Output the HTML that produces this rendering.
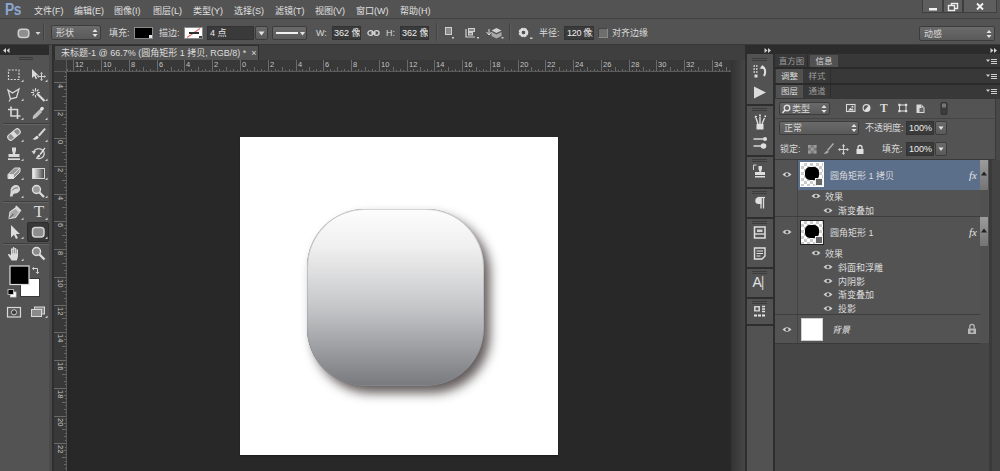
<!DOCTYPE html>
<html lang="zh-CN">
<head>
<meta charset="utf-8">
<title>Photoshop</title>
<style>
*{box-sizing:border-box;margin:0;padding:0}
html,body{width:1000px;height:471px;overflow:hidden;background:#535353}
body{position:relative;font-family:"Liberation Sans","Noto Sans CJK SC",sans-serif;font-size:11px;color:#dcdcdc;line-height:1}
.abs{position:absolute}
.t{position:absolute;white-space:nowrap;line-height:12px;height:12px;font-size:9px;color:#dadada}
/* menubar */
#menubar{left:0;top:0;width:1000px;height:18px;background:#535353}
#menubar .t{top:5px;font-size:9px;color:#e0e0e0}
#ps{left:5px;top:2px;font-size:16px;font-weight:bold;color:#8ca7d2;line-height:16px;height:16px;letter-spacing:-0.5px;transform:scaleX(.86);transform-origin:0 0}
.wbtn{position:absolute;top:0;height:13px;background:#5e5e5e;border:1px solid #3e3e3e;border-top:none}
/* options bar */
#optbar{left:0;top:18px;width:1000px;height:27px;background:#535353;border-top:1px solid #424242;border-bottom:1px solid #383838}
.dd{position:absolute;background:linear-gradient(#6a6a6a,#5a5a5a);border:1px solid #3c3c3c;border-radius:2px}
.field{position:absolute;background:#3a3a3a;border:1px solid #333}
.vsep{position:absolute;width:1px;background:#424242;border-right:1px solid #5c5c5c;box-sizing:content-box}
/* doc */
#tabbar{left:54px;top:45px;width:692px;height:15px;background:#3f3f3f}
#doctab{left:54px;top:45px;width:205px;height:15px;background:#535353;border:1px solid #2e2e2e;border-bottom:none}
#hruler{left:55px;top:60px;width:676px;height:12px;background:#383838;border-bottom:1px solid #5a5a5a;overflow:hidden}
#vruler{left:54px;top:72px;width:13px;height:399px;background:#383838;border-right:1px solid #5a5a5a;overflow:hidden}
#canvas{left:67px;top:72px;width:664px;height:399px;background:#282828;overflow:hidden}
#doc{left:173px;top:65px;width:318px;height:318px;background:#fff;box-shadow:0 1px 1px #1c1c1c}
.rl{position:absolute;font-size:7.5px;color:#c4c4c4;line-height:8px}
.tk{position:absolute;width:1px;background:#6a6a6a;display:block}
.tk.h{height:1px;width:auto}
.rv{writing-mode:vertical-rl;line-height:8px;width:8px}
/* tools */
#tools{left:0;top:45px;width:49px;height:426px;background:#535353}
/* right */
#rightbg{left:745px;top:45px;width:255px;height:426px;background:#3a3a3a}
.ptab{position:absolute;height:13px;font-size:8.5px;line-height:12px;text-align:center;color:#9c9c9c;white-space:nowrap}
.ptab.on{background:#515151;color:#d8d8d8}
.igrip{position:absolute;left:752px;width:15px;height:3px;border-top:1px solid #3c3c3c;border-bottom:1px solid #3c3c3c}
.isep{position:absolute;left:747px;width:26px;height:2px;background:#2e2e2e}
.ln{font-size:9px;color:#dcdcdc}
.fx{position:absolute;left:969px;width:10px;height:12px;font-family:"Liberation Serif",serif;font-style:italic;font-size:11px;line-height:12px;color:#e6e6e6}
.thumb{position:absolute;left:800px;width:24px;height:25px;border:1px solid #222;background-color:#fff;background-image:linear-gradient(45deg,#ccc 25%,transparent 25%,transparent 75%,#ccc 75%),linear-gradient(45deg,#ccc 25%,transparent 25%,transparent 75%,#ccc 75%);background-size:6px 6px;background-position:0 0,3px 3px}
.thumb i{position:absolute;left:4px;top:4px;width:14px;height:13px;border-radius:5px;background:#000}
.thumb b{position:absolute;left:14px;top:15px;width:8px;height:8px;border:1px solid #f0f0f0;background:#666}
</style>
</head>
<body>
<!-- MENUBAR -->
<div id="menubar" class="abs">
  <div id="ps" class="abs">Ps</div>
  <div class="t" style="left:34px">文件(F)</div>
  <div class="t" style="left:74px">编辑(E)</div>
  <div class="t" style="left:114px">图像(I)</div>
  <div class="t" style="left:153px">图层(L)</div>
  <div class="t" style="left:193px">类型(Y)</div>
  <div class="t" style="left:234px">选择(S)</div>
  <div class="t" style="left:275px">滤镜(T)</div>
  <div class="t" style="left:315px">视图(V)</div>
  <div class="t" style="left:356px">窗口(W)</div>
  <div class="t" style="left:400px">帮助(H)</div>
  <div class="wbtn" style="left:922px;width:21px"><svg width="19" height="12" viewBox="0 0 19 12"><rect x="6" y="8" width="8" height="2.5" fill="#f0f0f0"/></svg></div>
  <div class="wbtn" style="left:943px;width:20px"><svg width="18" height="12" viewBox="0 0 18 12"><rect x="7.5" y="3.5" width="6" height="5" fill="none" stroke="#f0f0f0" stroke-width="1.4"/><rect x="4.500" y="5.500" width="6" height="5" fill="#5e5e5e" stroke="#f0f0f0" stroke-width="1.4"/></svg></div>
  <div class="wbtn" style="left:963px;width:34px"><svg width="32" height="12" viewBox="0 0 32 12"><path d="M13 3.500l6 6M19 3.500l-6 6" stroke="#f4f4f4" stroke-width="1.8"/></svg></div>
</div>

<!-- OPTIONS BAR -->
<div id="optbar" class="abs"></div>
<div id="optitems">
  <svg class="abs" style="left:16px;top:26px" width="26" height="14" viewBox="0 0 26 14"><rect x="2.300" y="3.300" width="10.500" height="8.200" rx="3" fill="#8e8e8e" stroke="#cfcfcf" stroke-width="1.500"/><path d="M19.500 6h5l-2.500 3z" fill="#d8d8d8"/></svg>
  <div class="vsep" style="left:43px;top:23px;height:18px"></div>
  <div class="dd" style="left:51px;top:25px;width:50px;height:15px"></div>
  <div class="t" style="left:56px;top:27px">形状</div>
  <svg class="abs" style="left:92px;top:28px" width="6" height="10" viewBox="0 0 6 10"><path d="M0.500 4l2.500-3 2.500 3zM0.500 6l2.500 3 2.500-3z" fill="#e4e4e4"/></svg>
  <div class="t" style="left:109px;top:27px">填充:</div>
  <div class="abs" style="left:134px;top:27px;width:19px;height:12px;background:#000;border:1px solid #8a8a8a"><i style="position:absolute;right:0;bottom:0;width:3px;height:3px;background:#e8e8e8"></i></div>
  <div class="t" style="left:159px;top:27px">描边:</div>
  <div class="abs" style="left:184px;top:27px;width:19px;height:12px;background:#fff;border:1px solid #8a8a8a;overflow:hidden"><svg width="17" height="10" viewBox="0 0 17 10" style="display:block"><path d="M2 9.500L15 0.500" stroke="#e07070" stroke-width="1.200"/><path d="M4 5h10" stroke="#2e2e2e" stroke-width="2"/><rect x="14" y="8" width="3" height="2" fill="#444"/></svg></div>
  <div class="field" style="left:207px;top:26px;width:47px;height:14px"></div>
  <div class="t" style="left:210px;top:27px;color:#e8e8e8">4 点</div>
  <div class="dd" style="left:255px;top:26px;width:13px;height:14px"></div>
  <svg class="abs" style="left:258px;top:31px" width="7" height="5" viewBox="0 0 7 5"><path d="M0.500 0.500h6l-3 4z" fill="#e4e4e4"/></svg>
  <div class="dd" style="left:272px;top:26px;width:35px;height:14px"></div>
  <div class="abs" style="left:276px;top:32px;width:22px;height:2px;background:#f0f0f0"></div>
  <svg class="abs" style="left:300px;top:32px" width="5" height="4" viewBox="0 0 5 4"><path d="M0 0h5l-2.500 3.500z" fill="#e4e4e4"/></svg>
  <div class="t" style="left:316px;top:27px">W:</div>
  <div class="field" style="left:332px;top:26px;width:29px;height:14px;overflow:hidden"><div class="t" style="left:1px;top:0px;color:#efefef">362 像素</div></div>
  <svg class="abs" style="left:367px;top:29px" width="13" height="8" viewBox="0 0 13 8"><ellipse cx="3.500" cy="4" rx="2.600" ry="2.300" fill="none" stroke="#d8d8d8" stroke-width="1.300"/><ellipse cx="9.500" cy="4" rx="2.600" ry="2.300" fill="none" stroke="#d8d8d8" stroke-width="1.300"/><path d="M4 4h5" stroke="#d8d8d8" stroke-width="1.200"/></svg>
  <div class="t" style="left:386px;top:27px">H:</div>
  <div class="field" style="left:400px;top:26px;width:29px;height:14px;overflow:hidden"><div class="t" style="left:1px;top:0px;color:#efefef">362 像素</div></div>
  <div class="vsep" style="left:436px;top:23px;height:18px"></div>
  <svg class="abs" style="left:444px;top:26px" width="60" height="14" viewBox="0 0 60 14"><rect x="1.500" y="1.500" width="6" height="7" fill="#8a8a8a" stroke="#d0d0d0"/><rect x="8" y="11" width="2" height="1.500" fill="#ccc"/><path d="M22 3v8h9" fill="none" stroke="#d0d0d0" stroke-width="1.200"/><rect x="24.500" y="2.500" width="6" height="3" fill="#8a8a8a" stroke="#d0d0d0"/><rect x="24.500" y="6.500" width="4" height="2.500" fill="#8a8a8a" stroke="#d0d0d0"/><rect x="33" y="11" width="2" height="1.500" fill="#ccc"/><g transform="translate(2.500 0)"><path d="M50 2l5 2.500-5 2.500-5-2.500z" fill="#cfcfcf"/><path d="M45 6l5 2.500 5-2.500v4l-5 2.500-5-2.500z" fill="#a8a8a8"/><path d="M42.500 3v6M40 6l2.500 3 2.500-3" stroke="#ddd" fill="none"/><rect x="55" y="11" width="2" height="1.500" fill="#ccc"/></g></svg>
  <div class="vsep" style="left:509px;top:23px;height:18px"></div>
  <svg class="abs" style="left:518px;top:27px" width="16" height="13" viewBox="0 0 16 13"><circle cx="5.500" cy="5.500" r="3.400" fill="none" stroke="#dedede" stroke-width="2.800" stroke-dasharray="2.200 0.500"/><circle cx="5.500" cy="5.500" r="3" fill="none" stroke="#dedede" stroke-width="2"/><rect x="12" y="10.500" width="2.500" height="1.500" fill="#ccc"/></svg>
  <div class="t" style="left:539px;top:27px">半径:</div>
  <div class="field" style="left:564px;top:26px;width:30px;height:14px;overflow:hidden"><div class="t" style="left:2px;top:0px;color:#efefef;letter-spacing:-0.3px">120 像素</div></div>
  <div class="abs" style="left:598px;top:28px;width:10px;height:10px;background:#6e6e6e;border:1px solid #8a8a8a;border-top-color:#444;border-left-color:#444"></div>
  <div class="t" style="left:612px;top:27px">对齐边缘</div>
  <div class="dd" style="left:919px;top:26px;width:76px;height:15px"></div>
  <div class="t" style="left:924px;top:28px">动感</div>
  <svg class="abs" style="left:986px;top:29px" width="6" height="10" viewBox="0 0 6 10"><path d="M0.500 4l2.500-3 2.500 3zM0.500 6l2.500 3 2.500-3z" fill="#e4e4e4"/></svg>
</div>

<!-- DOCUMENT WINDOW -->
<div id="tabbar" class="abs"></div>
<div id="doctab" class="abs"><div class="t" id="tabtxt" style="left:6px;top:1px;font-size:9px;color:#dedede">未标题-1 @ 66.7% (圆角矩形 1 拷贝, RGB/8) * &nbsp;×</div></div>
<div id="hruler" class="abs"><i class="tk" style="left:1px;top:10px;height:2px"></i><i class="tk" style="left:5px;top:7px;height:5px"></i><i class="tk" style="left:8px;top:10px;height:2px"></i><i class="tk" style="left:12px;top:9px;height:3px"></i><i class="tk" style="left:15px;top:10px;height:2px"></i><i class="tk" style="left:18px;top:0;height:12px"></i><span class="rl" style="left:20px;top:1px">12</span><i class="tk" style="left:22px;top:10px;height:2px"></i><i class="tk" style="left:25px;top:9px;height:3px"></i><i class="tk" style="left:29px;top:10px;height:2px"></i><i class="tk" style="left:32px;top:7px;height:5px"></i><i class="tk" style="left:36px;top:10px;height:2px"></i><i class="tk" style="left:39px;top:9px;height:3px"></i><i class="tk" style="left:43px;top:10px;height:2px"></i><i class="tk" style="left:46px;top:0;height:12px"></i><span class="rl" style="left:48px;top:1px">10</span><i class="tk" style="left:50px;top:10px;height:2px"></i><i class="tk" style="left:53px;top:9px;height:3px"></i><i class="tk" style="left:57px;top:10px;height:2px"></i><i class="tk" style="left:60px;top:7px;height:5px"></i><i class="tk" style="left:64px;top:10px;height:2px"></i><i class="tk" style="left:67px;top:9px;height:3px"></i><i class="tk" style="left:70px;top:10px;height:2px"></i><i class="tk" style="left:74px;top:0;height:12px"></i><span class="rl" style="left:76px;top:1px">8</span><i class="tk" style="left:77px;top:10px;height:2px"></i><i class="tk" style="left:81px;top:9px;height:3px"></i><i class="tk" style="left:84px;top:10px;height:2px"></i><i class="tk" style="left:88px;top:7px;height:5px"></i><i class="tk" style="left:91px;top:10px;height:2px"></i><i class="tk" style="left:95px;top:9px;height:3px"></i><i class="tk" style="left:98px;top:10px;height:2px"></i><i class="tk" style="left:102px;top:0;height:12px"></i><span class="rl" style="left:104px;top:1px">6</span><i class="tk" style="left:105px;top:10px;height:2px"></i><i class="tk" style="left:109px;top:9px;height:3px"></i><i class="tk" style="left:112px;top:10px;height:2px"></i><i class="tk" style="left:116px;top:7px;height:5px"></i><i class="tk" style="left:119px;top:10px;height:2px"></i><i class="tk" style="left:123px;top:9px;height:3px"></i><i class="tk" style="left:126px;top:10px;height:2px"></i><i class="tk" style="left:129px;top:0;height:12px"></i><span class="rl" style="left:131px;top:1px">4</span><i class="tk" style="left:133px;top:10px;height:2px"></i><i class="tk" style="left:136px;top:9px;height:3px"></i><i class="tk" style="left:140px;top:10px;height:2px"></i><i class="tk" style="left:143px;top:7px;height:5px"></i><i class="tk" style="left:147px;top:10px;height:2px"></i><i class="tk" style="left:150px;top:9px;height:3px"></i><i class="tk" style="left:154px;top:10px;height:2px"></i><i class="tk" style="left:157px;top:0;height:12px"></i><span class="rl" style="left:159px;top:1px">2</span><i class="tk" style="left:161px;top:10px;height:2px"></i><i class="tk" style="left:164px;top:9px;height:3px"></i><i class="tk" style="left:168px;top:10px;height:2px"></i><i class="tk" style="left:171px;top:7px;height:5px"></i><i class="tk" style="left:175px;top:10px;height:2px"></i><i class="tk" style="left:178px;top:9px;height:3px"></i><i class="tk" style="left:182px;top:10px;height:2px"></i><i class="tk" style="left:185px;top:0;height:12px"></i><span class="rl" style="left:187px;top:1px">0</span><i class="tk" style="left:188px;top:10px;height:2px"></i><i class="tk" style="left:192px;top:9px;height:3px"></i><i class="tk" style="left:195px;top:10px;height:2px"></i><i class="tk" style="left:199px;top:7px;height:5px"></i><i class="tk" style="left:202px;top:10px;height:2px"></i><i class="tk" style="left:206px;top:9px;height:3px"></i><i class="tk" style="left:209px;top:10px;height:2px"></i><i class="tk" style="left:213px;top:0;height:12px"></i><span class="rl" style="left:215px;top:1px">2</span><i class="tk" style="left:216px;top:10px;height:2px"></i><i class="tk" style="left:220px;top:9px;height:3px"></i><i class="tk" style="left:223px;top:10px;height:2px"></i><i class="tk" style="left:227px;top:7px;height:5px"></i><i class="tk" style="left:230px;top:10px;height:2px"></i><i class="tk" style="left:234px;top:9px;height:3px"></i><i class="tk" style="left:237px;top:10px;height:2px"></i><i class="tk" style="left:241px;top:0;height:12px"></i><span class="rl" style="left:243px;top:1px">4</span><i class="tk" style="left:244px;top:10px;height:2px"></i><i class="tk" style="left:247px;top:9px;height:3px"></i><i class="tk" style="left:251px;top:10px;height:2px"></i><i class="tk" style="left:254px;top:7px;height:5px"></i><i class="tk" style="left:258px;top:10px;height:2px"></i><i class="tk" style="left:261px;top:9px;height:3px"></i><i class="tk" style="left:265px;top:10px;height:2px"></i><i class="tk" style="left:268px;top:0;height:12px"></i><span class="rl" style="left:270px;top:1px">6</span><i class="tk" style="left:272px;top:10px;height:2px"></i><i class="tk" style="left:275px;top:9px;height:3px"></i><i class="tk" style="left:279px;top:10px;height:2px"></i><i class="tk" style="left:282px;top:7px;height:5px"></i><i class="tk" style="left:286px;top:10px;height:2px"></i><i class="tk" style="left:289px;top:9px;height:3px"></i><i class="tk" style="left:293px;top:10px;height:2px"></i><i class="tk" style="left:296px;top:0;height:12px"></i><span class="rl" style="left:298px;top:1px">8</span><i class="tk" style="left:300px;top:10px;height:2px"></i><i class="tk" style="left:303px;top:9px;height:3px"></i><i class="tk" style="left:306px;top:10px;height:2px"></i><i class="tk" style="left:310px;top:7px;height:5px"></i><i class="tk" style="left:313px;top:10px;height:2px"></i><i class="tk" style="left:317px;top:9px;height:3px"></i><i class="tk" style="left:320px;top:10px;height:2px"></i><i class="tk" style="left:324px;top:0;height:12px"></i><span class="rl" style="left:326px;top:1px">10</span><i class="tk" style="left:327px;top:10px;height:2px"></i><i class="tk" style="left:331px;top:9px;height:3px"></i><i class="tk" style="left:334px;top:10px;height:2px"></i><i class="tk" style="left:338px;top:7px;height:5px"></i><i class="tk" style="left:341px;top:10px;height:2px"></i><i class="tk" style="left:345px;top:9px;height:3px"></i><i class="tk" style="left:348px;top:10px;height:2px"></i><i class="tk" style="left:352px;top:0;height:12px"></i><span class="rl" style="left:354px;top:1px">12</span><i class="tk" style="left:355px;top:10px;height:2px"></i><i class="tk" style="left:358px;top:9px;height:3px"></i><i class="tk" style="left:362px;top:10px;height:2px"></i><i class="tk" style="left:365px;top:7px;height:5px"></i><i class="tk" style="left:369px;top:10px;height:2px"></i><i class="tk" style="left:372px;top:9px;height:3px"></i><i class="tk" style="left:376px;top:10px;height:2px"></i><i class="tk" style="left:379px;top:0;height:12px"></i><span class="rl" style="left:381px;top:1px">14</span><i class="tk" style="left:383px;top:10px;height:2px"></i><i class="tk" style="left:386px;top:9px;height:3px"></i><i class="tk" style="left:390px;top:10px;height:2px"></i><i class="tk" style="left:393px;top:7px;height:5px"></i><i class="tk" style="left:397px;top:10px;height:2px"></i><i class="tk" style="left:400px;top:9px;height:3px"></i><i class="tk" style="left:404px;top:10px;height:2px"></i><i class="tk" style="left:407px;top:0;height:12px"></i><span class="rl" style="left:409px;top:1px">16</span><i class="tk" style="left:411px;top:10px;height:2px"></i><i class="tk" style="left:414px;top:9px;height:3px"></i><i class="tk" style="left:417px;top:10px;height:2px"></i><i class="tk" style="left:421px;top:7px;height:5px"></i><i class="tk" style="left:424px;top:10px;height:2px"></i><i class="tk" style="left:428px;top:9px;height:3px"></i><i class="tk" style="left:431px;top:10px;height:2px"></i><i class="tk" style="left:435px;top:0;height:12px"></i><span class="rl" style="left:437px;top:1px">18</span><i class="tk" style="left:438px;top:10px;height:2px"></i><i class="tk" style="left:442px;top:9px;height:3px"></i><i class="tk" style="left:445px;top:10px;height:2px"></i><i class="tk" style="left:449px;top:7px;height:5px"></i><i class="tk" style="left:452px;top:10px;height:2px"></i><i class="tk" style="left:456px;top:9px;height:3px"></i><i class="tk" style="left:459px;top:10px;height:2px"></i><i class="tk" style="left:463px;top:0;height:12px"></i><span class="rl" style="left:465px;top:1px">20</span><i class="tk" style="left:466px;top:10px;height:2px"></i><i class="tk" style="left:470px;top:9px;height:3px"></i><i class="tk" style="left:473px;top:10px;height:2px"></i><i class="tk" style="left:476px;top:7px;height:5px"></i><i class="tk" style="left:480px;top:10px;height:2px"></i><i class="tk" style="left:483px;top:9px;height:3px"></i><i class="tk" style="left:487px;top:10px;height:2px"></i><i class="tk" style="left:490px;top:0;height:12px"></i><span class="rl" style="left:492px;top:1px">22</span><i class="tk" style="left:494px;top:10px;height:2px"></i><i class="tk" style="left:497px;top:9px;height:3px"></i><i class="tk" style="left:501px;top:10px;height:2px"></i><i class="tk" style="left:504px;top:7px;height:5px"></i><i class="tk" style="left:508px;top:10px;height:2px"></i><i class="tk" style="left:511px;top:9px;height:3px"></i><i class="tk" style="left:515px;top:10px;height:2px"></i><i class="tk" style="left:518px;top:0;height:12px"></i><span class="rl" style="left:520px;top:1px">24</span><i class="tk" style="left:522px;top:10px;height:2px"></i><i class="tk" style="left:525px;top:9px;height:3px"></i><i class="tk" style="left:529px;top:10px;height:2px"></i><i class="tk" style="left:532px;top:7px;height:5px"></i><i class="tk" style="left:535px;top:10px;height:2px"></i><i class="tk" style="left:539px;top:9px;height:3px"></i><i class="tk" style="left:542px;top:10px;height:2px"></i><i class="tk" style="left:546px;top:0;height:12px"></i><span class="rl" style="left:548px;top:1px">26</span><i class="tk" style="left:549px;top:10px;height:2px"></i><i class="tk" style="left:553px;top:9px;height:3px"></i><i class="tk" style="left:556px;top:10px;height:2px"></i><i class="tk" style="left:560px;top:7px;height:5px"></i><i class="tk" style="left:563px;top:10px;height:2px"></i><i class="tk" style="left:567px;top:9px;height:3px"></i><i class="tk" style="left:570px;top:10px;height:2px"></i><i class="tk" style="left:574px;top:0;height:12px"></i><span class="rl" style="left:576px;top:1px">28</span><i class="tk" style="left:577px;top:10px;height:2px"></i><i class="tk" style="left:581px;top:9px;height:3px"></i><i class="tk" style="left:584px;top:10px;height:2px"></i><i class="tk" style="left:588px;top:7px;height:5px"></i><i class="tk" style="left:591px;top:10px;height:2px"></i><i class="tk" style="left:594px;top:9px;height:3px"></i><i class="tk" style="left:598px;top:10px;height:2px"></i><i class="tk" style="left:601px;top:0;height:12px"></i><span class="rl" style="left:603px;top:1px">30</span><i class="tk" style="left:605px;top:10px;height:2px"></i><i class="tk" style="left:608px;top:9px;height:3px"></i><i class="tk" style="left:612px;top:10px;height:2px"></i><i class="tk" style="left:615px;top:7px;height:5px"></i><i class="tk" style="left:619px;top:10px;height:2px"></i><i class="tk" style="left:622px;top:9px;height:3px"></i><i class="tk" style="left:626px;top:10px;height:2px"></i><i class="tk" style="left:629px;top:0;height:12px"></i><span class="rl" style="left:631px;top:1px">32</span><i class="tk" style="left:633px;top:10px;height:2px"></i><i class="tk" style="left:636px;top:9px;height:3px"></i><i class="tk" style="left:640px;top:10px;height:2px"></i><i class="tk" style="left:643px;top:7px;height:5px"></i><i class="tk" style="left:647px;top:10px;height:2px"></i><i class="tk" style="left:650px;top:9px;height:3px"></i><i class="tk" style="left:653px;top:10px;height:2px"></i><i class="tk" style="left:657px;top:0;height:12px"></i><span class="rl" style="left:659px;top:1px">34</span><i class="tk" style="left:660px;top:10px;height:2px"></i><i class="tk" style="left:664px;top:9px;height:3px"></i><i class="tk" style="left:667px;top:10px;height:2px"></i><i class="tk" style="left:671px;top:7px;height:5px"></i><i class="tk" style="left:674px;top:10px;height:2px"></i><i class="tk" style="left:678px;top:9px;height:3px"></i></div>
<div id="vruler" class="abs"><i class="tk h" style="top:0px;left:11px;width:2px"></i><i class="tk h" style="top:4px;left:10px;width:3px"></i><i class="tk h" style="top:7px;left:11px;width:2px"></i><i class="tk h" style="top:10px;left:0;width:13px"></i><span class="rl rv" style="left:2px;top:12px">4</span><i class="tk h" style="top:14px;left:11px;width:2px"></i><i class="tk h" style="top:17px;left:10px;width:3px"></i><i class="tk h" style="top:21px;left:11px;width:2px"></i><i class="tk h" style="top:24px;left:8px;width:5px"></i><i class="tk h" style="top:28px;left:11px;width:2px"></i><i class="tk h" style="top:31px;left:10px;width:3px"></i><i class="tk h" style="top:35px;left:11px;width:2px"></i><i class="tk h" style="top:38px;left:0;width:13px"></i><span class="rl rv" style="left:2px;top:40px">2</span><i class="tk h" style="top:42px;left:11px;width:2px"></i><i class="tk h" style="top:45px;left:10px;width:3px"></i><i class="tk h" style="top:49px;left:11px;width:2px"></i><i class="tk h" style="top:52px;left:8px;width:5px"></i><i class="tk h" style="top:56px;left:11px;width:2px"></i><i class="tk h" style="top:59px;left:10px;width:3px"></i><i class="tk h" style="top:63px;left:11px;width:2px"></i><i class="tk h" style="top:66px;left:0;width:13px"></i><span class="rl rv" style="left:2px;top:68px">0</span><i class="tk h" style="top:69px;left:11px;width:2px"></i><i class="tk h" style="top:73px;left:10px;width:3px"></i><i class="tk h" style="top:76px;left:11px;width:2px"></i><i class="tk h" style="top:80px;left:8px;width:5px"></i><i class="tk h" style="top:83px;left:11px;width:2px"></i><i class="tk h" style="top:87px;left:10px;width:3px"></i><i class="tk h" style="top:90px;left:11px;width:2px"></i><i class="tk h" style="top:94px;left:0;width:13px"></i><span class="rl rv" style="left:2px;top:96px">2</span><i class="tk h" style="top:97px;left:11px;width:2px"></i><i class="tk h" style="top:101px;left:10px;width:3px"></i><i class="tk h" style="top:104px;left:11px;width:2px"></i><i class="tk h" style="top:108px;left:8px;width:5px"></i><i class="tk h" style="top:111px;left:11px;width:2px"></i><i class="tk h" style="top:115px;left:10px;width:3px"></i><i class="tk h" style="top:118px;left:11px;width:2px"></i><i class="tk h" style="top:122px;left:0;width:13px"></i><span class="rl rv" style="left:2px;top:124px">4</span><i class="tk h" style="top:125px;left:11px;width:2px"></i><i class="tk h" style="top:128px;left:10px;width:3px"></i><i class="tk h" style="top:132px;left:11px;width:2px"></i><i class="tk h" style="top:135px;left:8px;width:5px"></i><i class="tk h" style="top:139px;left:11px;width:2px"></i><i class="tk h" style="top:142px;left:10px;width:3px"></i><i class="tk h" style="top:146px;left:11px;width:2px"></i><i class="tk h" style="top:149px;left:0;width:13px"></i><span class="rl rv" style="left:2px;top:151px">6</span><i class="tk h" style="top:153px;left:11px;width:2px"></i><i class="tk h" style="top:156px;left:10px;width:3px"></i><i class="tk h" style="top:160px;left:11px;width:2px"></i><i class="tk h" style="top:163px;left:8px;width:5px"></i><i class="tk h" style="top:167px;left:11px;width:2px"></i><i class="tk h" style="top:170px;left:10px;width:3px"></i><i class="tk h" style="top:174px;left:11px;width:2px"></i><i class="tk h" style="top:177px;left:0;width:13px"></i><span class="rl rv" style="left:2px;top:179px">8</span><i class="tk h" style="top:181px;left:11px;width:2px"></i><i class="tk h" style="top:184px;left:10px;width:3px"></i><i class="tk h" style="top:187px;left:11px;width:2px"></i><i class="tk h" style="top:191px;left:8px;width:5px"></i><i class="tk h" style="top:194px;left:11px;width:2px"></i><i class="tk h" style="top:198px;left:10px;width:3px"></i><i class="tk h" style="top:201px;left:11px;width:2px"></i><i class="tk h" style="top:205px;left:0;width:13px"></i><span class="rl rv" style="left:2px;top:207px">10</span><i class="tk h" style="top:208px;left:11px;width:2px"></i><i class="tk h" style="top:212px;left:10px;width:3px"></i><i class="tk h" style="top:215px;left:11px;width:2px"></i><i class="tk h" style="top:219px;left:8px;width:5px"></i><i class="tk h" style="top:222px;left:11px;width:2px"></i><i class="tk h" style="top:226px;left:10px;width:3px"></i><i class="tk h" style="top:229px;left:11px;width:2px"></i><i class="tk h" style="top:233px;left:0;width:13px"></i><span class="rl rv" style="left:2px;top:235px">12</span><i class="tk h" style="top:236px;left:11px;width:2px"></i><i class="tk h" style="top:240px;left:10px;width:3px"></i><i class="tk h" style="top:243px;left:11px;width:2px"></i><i class="tk h" style="top:246px;left:8px;width:5px"></i><i class="tk h" style="top:250px;left:11px;width:2px"></i><i class="tk h" style="top:253px;left:10px;width:3px"></i><i class="tk h" style="top:257px;left:11px;width:2px"></i><i class="tk h" style="top:260px;left:0;width:13px"></i><span class="rl rv" style="left:2px;top:262px">14</span><i class="tk h" style="top:264px;left:11px;width:2px"></i><i class="tk h" style="top:267px;left:10px;width:3px"></i><i class="tk h" style="top:271px;left:11px;width:2px"></i><i class="tk h" style="top:274px;left:8px;width:5px"></i><i class="tk h" style="top:278px;left:11px;width:2px"></i><i class="tk h" style="top:281px;left:10px;width:3px"></i><i class="tk h" style="top:285px;left:11px;width:2px"></i><i class="tk h" style="top:288px;left:0;width:13px"></i><span class="rl rv" style="left:2px;top:290px">16</span><i class="tk h" style="top:292px;left:11px;width:2px"></i><i class="tk h" style="top:295px;left:10px;width:3px"></i><i class="tk h" style="top:298px;left:11px;width:2px"></i><i class="tk h" style="top:302px;left:8px;width:5px"></i><i class="tk h" style="top:305px;left:11px;width:2px"></i><i class="tk h" style="top:309px;left:10px;width:3px"></i><i class="tk h" style="top:312px;left:11px;width:2px"></i><i class="tk h" style="top:316px;left:0;width:13px"></i><span class="rl rv" style="left:2px;top:318px">18</span><i class="tk h" style="top:319px;left:11px;width:2px"></i><i class="tk h" style="top:323px;left:10px;width:3px"></i><i class="tk h" style="top:326px;left:11px;width:2px"></i><i class="tk h" style="top:330px;left:8px;width:5px"></i><i class="tk h" style="top:333px;left:11px;width:2px"></i><i class="tk h" style="top:337px;left:10px;width:3px"></i><i class="tk h" style="top:340px;left:11px;width:2px"></i><i class="tk h" style="top:344px;left:0;width:13px"></i><span class="rl rv" style="left:2px;top:346px">20</span><i class="tk h" style="top:347px;left:11px;width:2px"></i><i class="tk h" style="top:351px;left:10px;width:3px"></i><i class="tk h" style="top:354px;left:11px;width:2px"></i><i class="tk h" style="top:357px;left:8px;width:5px"></i><i class="tk h" style="top:361px;left:11px;width:2px"></i><i class="tk h" style="top:364px;left:10px;width:3px"></i><i class="tk h" style="top:368px;left:11px;width:2px"></i><i class="tk h" style="top:371px;left:0;width:13px"></i><span class="rl rv" style="left:2px;top:373px">22</span><i class="tk h" style="top:375px;left:11px;width:2px"></i><i class="tk h" style="top:378px;left:10px;width:3px"></i><i class="tk h" style="top:382px;left:11px;width:2px"></i><i class="tk h" style="top:385px;left:8px;width:5px"></i><i class="tk h" style="top:389px;left:11px;width:2px"></i><i class="tk h" style="top:392px;left:10px;width:3px"></i><i class="tk h" style="top:396px;left:11px;width:2px"></i><i class="tk h" style="top:399px;left:0;width:13px"></i><span class="rl rv" style="left:2px;top:401px">24</span></div>
<div class="abs" style="left:54px;top:60px;width:13px;height:12px;background:#3b3b3b;border-right:1px solid #5a5a5a;border-bottom:1px solid #5a5a5a"></div>
<div id="canvas" class="abs">
  <div id="doc" class="abs">
    <div class="abs" id="shape2" style="left:67px;top:71.500px;width:177px;height:177px;border-radius:58px;background:#555;box-shadow:6px 7px 11px 0 rgba(25,14,14,.68)"></div>
    <div class="abs" id="shape1" style="left:67px;top:71.500px;width:177px;height:177px;border-radius:58px;background:linear-gradient(#fdfdfd 0%,#efefef 22%,#c6c7c9 55%,#9b9c9f 80%,#78797d 100%);box-shadow:inset 0 0 0 1px rgba(150,150,155,.4)"></div>
  </div>
  </div>
</div>
<div class="abs" style="left:731px;top:60px;width:14px;height:411px;background:linear-gradient(90deg,#333,#464646)"></div>

<!-- TOOLS -->
<div class="abs" style="left:49px;top:45px;width:3px;height:426px;background:#494949"></div><div class="abs" style="left:52px;top:45px;width:2px;height:426px;background:#2e2e2e"></div>
<div id="tools" class="abs"></div>
<div class="abs" style="left:0;top:45px;width:49px;height:10px;background:#2c2c2c"></div>
<svg class="abs" style="left:3px;top:48px" width="7" height="5" viewBox="0 0 7 5"><path d="M3 0v5l-3-2.500zM6.500 0v5l-3-2.500z" fill="#d0d0d0"/></svg>
<div id="toolicons"><div class="abs" style="left:19px;top:57px;width:14px;height:3px;border-top:1px solid #3a3a3a;border-bottom:1px solid #3a3a3a"></div>
<div class="abs" style="left:27px;top:222px;width:22px;height:20px;background:#383838;border:1px solid #2c2c2c;border-radius:2px"></div>
<div class="abs" style="left:3px;top:123px;width:46px;height:2px;border-top:1px solid #3f3f3f;border-bottom:1px solid #626262"></div>
<div class="abs" style="left:3px;top:201px;width:46px;height:2px;border-top:1px solid #3f3f3f;border-bottom:1px solid #626262"></div>
<div class="abs" style="left:3px;top:243px;width:46px;height:2px;border-top:1px solid #3f3f3f;border-bottom:1px solid #626262"></div>
<svg class="abs" style="left:0;top:60px" width="52" height="270" viewBox="0 60 52 270" fill="none" stroke="none">
<g fill="#cfcfcf">
<!-- flyout markers -->
<path d="M21 82h2.500v-2.500zM45 82h2.500v-2.500zM21 101h2.500v-2.500zM45 101h2.500v-2.500zM21 120h2.500v-2.500zM45 120h2.500v-2.500zM21 142h2.500v-2.500zM45 142h2.500v-2.500zM21 161h2.500v-2.500zM45 161h2.500v-2.500zM21 180h2.500v-2.500zM45 180h2.500v-2.500zM21 198h2.500v-2.500zM45 198h2.500v-2.500zM21 220h2.500v-2.500zM45 220h2.500v-2.500zM21 239h2.500v-2.500zM45 239h2.500v-2.500zM21 261h2.500v-2.500zM45 318h2.500v-2.500z"/>
</g>
<!-- 1 marquee -->
<rect x="8.500" y="70" width="10.500" height="9.500" stroke="#d4d4d4" stroke-width="1.200" stroke-dasharray="2 1.300"/>
<!-- 2 move -->
<path d="M32 69v9l2.300-2 1.500 3.200 1.400-.6-1.500-3.200h3z" fill="#dadada"/>
<path d="M41.500 73.500v6M38.500 76.500h6" stroke="#d4d4d4" stroke-width="1.100"/>
<path d="M41.500 72l1.500 1.800h-3zM41.500 81l1.500-1.800h-3zM37 76.500l1.800-1.500v3zM46 76.500l-1.800-1.500v3z" fill="#d4d4d4"/>
<!-- 3 polygonal lasso -->
<path d="M8 90l4.500 3 6.500-4-2.500 8.500-6 1.500z" stroke="#d8d8d8" stroke-width="1.300"/>
<path d="M10.500 99l-1.500 2.500" stroke="#d8d8d8" stroke-width="1.200"/>
<!-- 4 magic wand -->
<path d="M37 93.500l7.500 7.500" stroke="#dadada" stroke-width="2.200"/>
<path d="M35.500 88v3.500M35.500 95v2.500M31 92.500h3M37.500 92.500h2.500M32.500 89.500l1.800 1.800M38.500 89.500l-1.800 1.800M32.500 95.500l1.800-1.800" stroke="#dadada" stroke-width="1.100"/>
<!-- 5 crop -->
<path d="M11 106.500v9.500h9.500M8 109.500h9.500v9.500" stroke="#d8d8d8" stroke-width="1.600"/>
<!-- 6 eyedropper -->
<path d="M33 118.500l1-3 5.500-5.500 2 2-5.500 5.500z" fill="#bdbdbd" stroke="#d8d8d8" stroke-width=".8"/>
<path d="M39.500 109.500l1.500-2.200a1.600 1.600 0 0 1 2.500 2.200l-2 1.800z" fill="#e2e2e2"/>
<!-- 7 healing brush (bandage) -->
<g transform="rotate(-40 14 134.500)"><rect x="7" y="131.500" width="14" height="6" rx="2.500" fill="#8c8c8c" stroke="#dcdcdc" stroke-width="1.100"/><rect x="12" y="131.500" width="4" height="6" fill="#dcdcdc"/></g>
<!-- 8 brush -->
<path d="M44.500 128l-6.500 7 1.600 1.600 6.200-7.300z" fill="#d8d8d8"/>
<path d="M37.300 135.700c-2 .3-2.300 2.500-4.800 3.600 2.500 1 5.500 0 6.300-2.100z" fill="#e0e0e0"/>
<!-- 9 stamp -->
<path d="M12 147.500h4v3l-1 3.500h4.500v3h-11v-3h4.500l-1-3.500z" fill="#dadada"/>
<rect x="8" y="158.300" width="12" height="1.700" fill="#dadada"/>
<!-- 10 history brush -->
<path d="M33.500 152a5.500 5 0 1 1 2.500 6" stroke="#d4d4d4" stroke-width="1.300"/>
<path d="M31.500 151l2.500 3.500 2-3.500z" fill="#d4d4d4"/>
<path d="M44.500 147.500l-5 6.500 1.300 1 4.600-6.600zM39 154.500c-1.500.5-1.500 2-3 3 2 .5 4 0 4.300-1.700z" fill="#e2e2e2"/>
<!-- 11 eraser -->
<path d="M8 174.500l6.500-6.500h5.500v4l-6.500 6.500h-5.500z" fill="#9a9a9a" stroke="#dcdcdc" stroke-width="1"/>
<path d="M8 174.500h5.500v4M13.500 174.500l6.500-6.500" stroke="#dcdcdc" stroke-width="1"/>
<path d="M8.500 175h5v3.500h-5z" fill="#e4e4e4"/>
<!-- 12 gradient -->
<!-- 13 smudge/blur -->
<path d="M10 196.500c0-3 1-4 .5-6 0-3 2.500-5.500 5.500-5.500 2.500 0 4 2 4 4.200 0 2.600-2.500 4.300-5 4.300-1.600 0-2 1-2.500 3z" fill="#d8d8d8"/>
<path d="M12 190.500c1.500-2 3.500-3 6-2.500" stroke="#6a6a6a" stroke-width="1"/>
<!-- 14 dodge -->
<circle cx="36.500" cy="189.500" r="4" fill="#9c9c9c" stroke="#dedede" stroke-width="1.400"/>
<path d="M39.500 192.500l4.500 4.500" stroke="#dedede" stroke-width="2.200"/>
<!-- 15 pen -->
<path d="M9 218.500l1-6.500 5.500-4 4 4-4 5.500z" fill="#a8a8a8" stroke="#dedede" stroke-width="1.100"/>
<path d="M9 218.500l4.500-4.500" stroke="#4c4c4c" stroke-width="1"/>
<path d="M15 207l1.500-1.500 5 5-1.500 1.500z" fill="#dedede"/>
<!-- 17 path select -->
<path d="M11 225v12.500l3-2.800 2 4.300 1.900-.9-2-4.200h4z" fill="#dcdcdc"/>
<!-- 18 rounded rect (active) -->
<rect x="32.500" y="227.500" width="11.500" height="9.500" rx="3" fill="#8c8c8c" stroke="#d4d4d4" stroke-width="1.500"/>
<!-- 19 hand -->
<path d="M11.500 260.500c-1-2.500-3.300-4.500-3.500-6 .8-.9 2-.3 3 1v-6.300c0-1.200 1.700-1.200 1.700 0v-1.400c0-1.200 1.800-1.200 1.800 0v1c0-1.200 1.800-1.200 1.800 0v1.200c0-1.100 1.700-1.100 1.700 0v6c0 2-1 3-1.200 4.500z" fill="#dcdcdc"/>
<path d="M12.700 249.500v4M14.500 249v4.500M16.300 249.500v4" stroke="#6a6a6a" stroke-width=".6"/>
<!-- 20 zoom -->
<circle cx="36.500" cy="251.500" r="4" fill="#8a8a8a" stroke="#dedede" stroke-width="1.500"/>
<path d="M39.500 254.500l5 5" stroke="#dedede" stroke-width="2.400"/>
<!-- color swatches -->
<rect x="20.500" y="278.500" width="19" height="18" fill="#fff" stroke="#3a3a3a" stroke-width="1"/>
<rect x="10" y="266" width="19" height="18.500" fill="#000" stroke="#dcdcdc" stroke-width="1.200"/>
<path d="M33.500 268.500h4v4" stroke="#d8d8d8" stroke-width="1"/>
<path d="M32 268.500l2-1.800v3.600zM37.500 274l-1.800-2h3.600z" fill="#d8d8d8"/>
<rect x="10.500" y="292" width="5.500" height="5" fill="#fff" stroke="#cfcfcf" stroke-width=".8"/>
<rect x="8" y="289.500" width="5.500" height="5" fill="#000" stroke="#cfcfcf" stroke-width=".8"/>
<!-- quick mask -->
<rect x="7.500" y="307.500" width="13" height="9.500" fill="#5a5a5a" stroke="#d8d8d8" stroke-width="1.200"/>
<circle cx="14" cy="312.300" r="2.600" fill="#3c3c3c" stroke="#d8d8d8" stroke-width=".9"/>
<!-- screen mode -->
<rect x="34.500" y="307" width="10" height="7" fill="#8a8a8a" stroke="#d8d8d8" stroke-width="1"/>
<rect x="31.500" y="309.500" width="10" height="7" fill="#8a8a8a" stroke="#d8d8d8" stroke-width="1"/>
</svg>
<div class="abs" style="left:32px;top:204px;width:14px;height:16px;font-family:'Liberation Serif',serif;font-size:17px;line-height:16px;color:#dedede;text-align:center">T</div>
<div class="abs" style="left:31.500px;top:167.500px;width:13px;height:11.500px;border:1px solid #d4d4d4;background:linear-gradient(90deg,#f2f2f2,#4a4a4a)"></div>
</div>

<!-- RIGHT PANELS -->
<div id="rightbg" class="abs"></div>
<div id="rightpanels"><!-- dark gaps / headers -->
<div class="abs" style="left:745px;top:45px;width:255px;height:9px;background:#2c2c2c"></div>
<div class="abs" style="left:745px;top:54px;width:2px;height:417px;background:#2e2e2e"></div>
<div class="abs" style="left:773px;top:54px;width:2px;height:417px;background:#2e2e2e"></div>
<svg class="abs" style="left:764px;top:48px" width="7" height="5" viewBox="0 0 7 5"><path d="M0.500 0v5l3-2.500zM4 0v5l3-2.500z" fill="#d0d0d0"/></svg>
<svg class="abs" style="left:990px;top:48px" width="7" height="5" viewBox="0 0 7 5"><path d="M0.500 0v5l3-2.500zM4 0v5l3-2.500z" fill="#d0d0d0"/></svg>
<!-- icon strip -->
<div class="abs" style="left:747px;top:54px;width:26px;height:417px;background:#525252"></div>
<div class="igrip" style="top:58px"></div>
<div class="isep" style="top:104px"></div><div class="igrip" style="top:108px"></div>
<div class="isep" style="top:155px"></div><div class="igrip" style="top:159px"></div>
<div class="isep" style="top:187px"></div><div class="igrip" style="top:191px"></div>
<div class="isep" style="top:217px"></div><div class="igrip" style="top:221px"></div>
<div class="isep" style="top:267px"></div><div class="igrip" style="top:271px"></div>
<div class="isep" style="top:297px"></div><div class="igrip" style="top:301px"></div>
<div class="isep" style="top:324px"></div>
<svg class="abs" style="left:747px;top:55px" width="26" height="275" viewBox="748.500 55 26 275" fill="none">
<!-- history -->
<path d="M755 66h5M755 69h5M755 72h5" stroke="#dcdcdc" stroke-width="1.500" stroke-dasharray="1.500 1"/>
<rect x="756" y="74.500" width="3" height="3" fill="#dcdcdc"/>
<path d="M763 66.500c4 1 4.500 6 2.500 9.500" stroke="#e0e0e0" stroke-width="2"/>
<path d="M761 68.500l3.500-3.500 1 4z" fill="#e0e0e0"/>
<!-- actions play -->
<path d="M755.500 86.500v12l12-6z" fill="#dcdcdc"/>
<!-- brushes in cup -->
<path d="M758 124h7v5.500h-7z" fill="#e0e0e0"/>
<path d="M759.500 124l-2-6M761.500 124v-7.500M763.500 124l2.500-6" stroke="#dcdcdc" stroke-width="1.400"/>
<path d="M756.500 117.500l1.500-1.500M761.500 116v-1.500M766.500 117l.5-1.500" stroke="#f0f0f0" stroke-width="1.600"/>
<!-- brush presets -->
<path d="M755 139h10M755 146h8" stroke="#d8d8d8" stroke-width="1.400"/>
<circle cx="766.500" cy="139" r="2" fill="#e0e0e0"/><circle cx="765" cy="146" r="2.800" fill="#e0e0e0"/>
<!-- clone source -->
<path d="M760 166h3.500v3l-1 3h4v3h-10v-3h4.500l-1-3z" fill="#dedede"/>
<rect x="756.500" y="176" width="10" height="1.500" fill="#dedede"/>
<path d="M755 165v5M755 165h3" stroke="#d0d0d0" stroke-width="1"/>
<!-- paragraph -->
<path d="M762.500 198v10.500M765 198v10.500" stroke="#dedede" stroke-width="1.300"/>
<path d="M763 197.500h-3a3.200 3.200 0 0 0 0 6.400h3z" fill="#dedede"/>
<path d="M759 197.500h7.500" stroke="#dedede" stroke-width="1.200"/>
<!-- box icon -->
<rect x="756" y="227" width="10.500" height="11" fill="none" stroke="#e0e0e0" stroke-width="1.500"/>
<path d="M756 234h10.500" stroke="#e0e0e0" stroke-width="1.300"/>
<rect x="758.500" y="229.500" width="5.500" height="2.500" fill="#cfcfcf"/>
<!-- notes -->
<path d="M756 248h10.500v8l-3 3h-7.500z" fill="none" stroke="#e0e0e0" stroke-width="1.400"/>
<path d="M758 251h6.500M758 253.500h6.500M758 256h4" stroke="#e0e0e0" stroke-width="1"/>
<!-- last icon -->
<rect x="755.500" y="306" width="6" height="5.500" fill="#cfcfcf"/><circle cx="758.500" cy="308.800" r="1.500" fill="#555"/>
<path d="M763.500 306.500h3M763.500 309h3M763.500 311.500h3" stroke="#dedede" stroke-width="1.300"/>
<path d="M755.500 315.500h11" stroke="#e6e6e6" stroke-width="2.200" stroke-dasharray="3 1"/>
</svg>
<div class="abs" style="left:752.500px;top:274px;width:16px;height:16px;font-size:14px;line-height:16px;color:#e2e2e2;letter-spacing:0">A<span style="font-weight:normal;font-size:14px;margin-left:-1px;color:#cfcfcf">|</span></div>

<!-- panel tab rows -->
<div class="abs" style="left:775px;top:55px;width:225px;height:13px;background:#383838"></div>
<div class="abs" style="left:775px;top:69px;width:225px;height:14px;background:#383838"></div>
<div class="abs" style="left:775px;top:85px;width:225px;height:14px;background:#383838"></div>
<div class="abs" style="left:775px;top:67px;width:225px;height:2px;background:#2a2a2a"></div>
<div class="abs" style="left:775px;top:83px;width:225px;height:2px;background:#2a2a2a"></div>
<div class="ptab" style="left:776px;top:55px;width:32px;height:12px;border-right:1px solid #2c2c2c">直方图</div>
<div class="ptab on" style="left:810px;top:55px;width:28px;height:12px">信息</div>
<div class="ptab on" style="left:776px;top:69px;width:27px;height:14px;line-height:14px">调整</div>
<div class="ptab" style="left:804px;top:69px;width:27px;height:14px;line-height:14px;border-right:1px solid #2c2c2c">样式</div>
<div class="ptab on" style="left:776px;top:85px;width:27px">图层</div>
<div class="ptab" style="left:804px;top:85px;width:27px;border-right:1px solid #2c2c2c">通道</div>
<svg class="abs" style="left:986px;top:58px" width="11" height="38" viewBox="0 0 11 38"><g fill="#cfcfcf"><path d="M0 1.500h4l-2 2.500z"/><path d="M5 1h6v1h-6zM5 3h6v1h-6zM5 5h6v1h-6z"/><path d="M0 16.500h4l-2 2.500z"/><path d="M5 16h6v1h-6zM5 18h6v1h-6zM5 20h6v1h-6z"/><path d="M0 31.500h4l-2 2.500z"/><path d="M5 31h6v1h-6zM5 33h6v1h-6zM5 35h6v1h-6z"/></g></svg>

<!-- layers panel body -->
<div class="abs" style="left:775px;top:99px;width:225px;height:61px;background:#535353"></div>
<div class="abs" style="left:775px;top:118px;width:225px;height:1px;background:#454545"></div>
<div class="dd" style="left:779px;top:102px;width:51px;height:13px"></div>
<svg class="abs" style="left:782px;top:104px" width="9" height="10" viewBox="0 0 9 10"><circle cx="5" cy="4" r="2.800" fill="none" stroke="#e6e6e6" stroke-width="1.300"/><path d="M3 6l-2.500 3" stroke="#e6e6e6" stroke-width="1.500"/></svg>
<div class="t" style="left:792px;top:103px;font-size:9px">类型</div>
<svg class="abs" style="left:821px;top:104px" width="6" height="10" viewBox="0 0 6 10"><path d="M0.500 4l2.500-3 2.500 3zM0.500 6l2.500 3 2.500-3z" fill="#e4e4e4"/></svg>
<svg class="abs" style="left:844px;top:102px" width="106" height="14" viewBox="844 102 106 14" fill="none">
<rect x="846.500" y="104.500" width="8.500" height="7" stroke="#d8d8d8" stroke-width="1.100"/><path d="M848 110.500l2.300-2.800 1.400 1.400.9-.9 1.400 2.300z" fill="#d8d8d8"/><rect x="851.500" y="105.800" width="1.800" height="1.800" fill="#d8d8d8"/>
<circle cx="866.500" cy="108" r="3.400" fill="#555" stroke="#d8d8d8" stroke-width="1.200"/><path d="M866.500 104.600a3.400 3.400 0 0 1 0 6.800z" fill="#e0e0e0" transform="rotate(40 866.500 108)"/>
<rect x="899.500" y="105" width="6.500" height="6" stroke="#d8d8d8" stroke-width="1.100"/><rect x="898.300" y="103.800" width="2.200" height="2.200" fill="#e0e0e0"/><rect x="905" y="103.800" width="2.200" height="2.200" fill="#e0e0e0"/><rect x="898.300" y="110" width="2.200" height="2.200" fill="#e0e0e0"/><rect x="905" y="110" width="2.200" height="2.200" fill="#e0e0e0"/>
<path d="M916.500 104.500h5l3 3v5.500h-8z" fill="#d8d8d8"/><path d="M919.500 108h4v4h-4z" fill="#666"/><path d="M921.500 104.500v3h3" stroke="#888" stroke-width=".8"/>
<rect x="941" y="102.500" width="6" height="12" rx="1" fill="#3c3c3c" stroke="#333" stroke-width="1"/><rect x="942" y="103.500" width="4" height="4" fill="#777"/>
</svg>
<div class="abs" style="left:880px;top:101px;width:10px;height:14px;font-family:'Liberation Serif',serif;font-weight:bold;font-size:11.500px;line-height:14px;color:#dcdcdc">T</div>

<div class="dd" style="left:779px;top:121px;width:80px;height:14px"></div>
<div class="t" style="left:784px;top:122px;font-size:9px">正常</div>
<svg class="abs" style="left:851px;top:123px" width="6" height="10" viewBox="0 0 6 10"><path d="M0.500 4l2.500-3 2.500 3zM0.500 6l2.500 3 2.500-3z" fill="#e4e4e4"/></svg>
<div class="t" style="left:865px;top:122px;font-size:9px">不透明度:</div>
<div class="field" style="left:906px;top:121px;width:28px;height:14px"></div>
<div class="t" style="left:909px;top:122px;font-size:9px;color:#eee">100%</div>
<div class="dd" style="left:935px;top:121px;width:12px;height:14px"></div>
<svg class="abs" style="left:938px;top:126px" width="6" height="5" viewBox="0 0 6 5"><path d="M0.500 0.500h5l-2.500 3.500z" fill="#e4e4e4"/></svg>

<div class="t" style="left:780px;top:143px;font-size:9px">锁定:</div>
<svg class="abs" style="left:806px;top:141px" width="62" height="16" viewBox="806 141 62 16" fill="none">
<rect x="808" y="145" width="8.500" height="8.500" fill="#7a7a7a"/><path d="M808 145h2.800v2.800h-2.800zM813.700 145h2.800v2.800h-2.800zM810.800 147.800h2.900v2.900h-2.900zM808 150.700h2.800v2.800h-2.800zM813.700 150.700h2.800v2.800h-2.800z" fill="#9a9a9a"/>
<path d="M833.500 143.500l-6 7" stroke="#a8a8a8" stroke-width="1.600"/><path d="M827.500 150.500c-1.500.3-2 2-4 3 2 .7 4.500 0 5.200-1.800z" fill="#a8a8a8"/>
<path d="M843.500 145.500v8M839.500 149.500h8" stroke="#d0d0d0" stroke-width="1.100"/><path d="M843.500 144l1.800 2.200h-3.600zM843.500 155l1.800-2.200h-3.600zM838 149.500l2.200-1.800v3.600zM849 149.500l-2.200-1.800v3.600z" fill="#d0d0d0"/>
<rect x="856.500" y="149" width="7" height="5" fill="#e0e0e0"/><path d="M858 149v-1.500a2 2 0 0 1 4 0v1.500" stroke="#e0e0e0" stroke-width="1.300"/>
</svg>
<div class="t" style="left:882px;top:143px;font-size:9px">填充:</div>
<div class="field" style="left:906px;top:142px;width:28px;height:14px"></div>
<div class="t" style="left:909px;top:143px;font-size:9px;color:#eee">100%</div>
<div class="dd" style="left:935px;top:142px;width:12px;height:14px"></div>
<svg class="abs" style="left:938px;top:147px" width="6" height="5" viewBox="0 0 6 5"><path d="M0.500 0.500h5l-2.500 3.500z" fill="#e4e4e4"/></svg>

<!-- layer list -->
<div class="abs" style="left:775px;top:159px;width:225px;height:1px;background:#3a3a3a"></div>
<div class="abs" style="left:775px;top:160px;width:225px;height:311px;background:#464646"></div>
<div class="abs" style="left:775px;top:160px;width:205px;height:183px;background:#535353"></div>
<div class="abs" style="left:798px;top:160px;width:182px;height:30px;background:#5b6e8a"></div>
<div class="abs" style="left:797px;top:160px;width:1px;height:183px;background:#444"></div>
<div class="abs" style="left:775px;top:216px;width:205px;height:1px;background:#3e3e3e"></div>
<div class="abs" style="left:775px;top:314px;width:205px;height:1px;background:#3e3e3e"></div>
<div class="abs" style="left:775px;top:343px;width:205px;height:1px;background:#3a3a3a"></div>
<!-- scrollbar -->
<div class="abs" style="left:980px;top:160px;width:9px;height:183px;background:#515151"></div>
<div class="abs" style="left:980px;top:160px;width:8px;height:30px;background:linear-gradient(#9c9c9c,#747474)"></div>
<div class="abs" style="left:980px;top:217px;width:8px;height:29px;background:linear-gradient(#9c9c9c,#747474)"></div>
<svg class="abs" style="left:981px;top:171px" width="6" height="5" viewBox="0 0 6 5"><path d="M0 4.500h6l-3-4z" fill="#222"/></svg>
<svg class="abs" style="left:981px;top:228px" width="6" height="5" viewBox="0 0 6 5"><path d="M0 4.500h6l-3-4z" fill="#222"/></svg>
<div class="abs" style="left:995px;top:99px;width:1px;height:61px;background:#3a3a3a"></div><div class="abs" style="left:996px;top:99px;width:4px;height:61px;background:#484848"></div>
<div class="abs" style="left:989px;top:160px;width:3px;height:311px;background:#3a3a3a"></div><div class="abs" style="left:992px;top:160px;width:8px;height:311px;background:#434343"></div>

<!-- eyes -->
<svg class="abs" style="left:776px;top:160px" width="70" height="183" viewBox="776 160 70 183" fill="none">

<g transform="translate(787 174.500)"><path d="M-4.500 0q4.500-4.400 9 0q-4.500 4.400-9 0z" fill="#d0d0d0"/><circle cx="0" cy="0" r="1.500" fill="#444"/></g><g transform="translate(816 196)"><path d="M-4.500 0q4.500-4.400 9 0q-4.500 4.400-9 0z" fill="#d0d0d0"/><circle cx="0" cy="0" r="1.500" fill="#444"/></g><g transform="translate(828 210.500)"><path d="M-4.500 0q4.500-4.400 9 0q-4.500 4.400-9 0z" fill="#d0d0d0"/><circle cx="0" cy="0" r="1.500" fill="#444"/></g>
<g transform="translate(787 232)"><path d="M-4.500 0q4.500-4.400 9 0q-4.500 4.400-9 0z" fill="#d0d0d0"/><circle cx="0" cy="0" r="1.500" fill="#444"/></g><g transform="translate(816 253)"><path d="M-4.500 0q4.500-4.400 9 0q-4.500 4.400-9 0z" fill="#d0d0d0"/><circle cx="0" cy="0" r="1.500" fill="#444"/></g><g transform="translate(828 267)"><path d="M-4.500 0q4.500-4.400 9 0q-4.500 4.400-9 0z" fill="#d0d0d0"/><circle cx="0" cy="0" r="1.500" fill="#444"/></g><g transform="translate(828 281)"><path d="M-4.500 0q4.500-4.400 9 0q-4.500 4.400-9 0z" fill="#d0d0d0"/><circle cx="0" cy="0" r="1.500" fill="#444"/></g><g transform="translate(828 294.500)"><path d="M-4.500 0q4.500-4.400 9 0q-4.500 4.400-9 0z" fill="#d0d0d0"/><circle cx="0" cy="0" r="1.500" fill="#444"/></g><g transform="translate(828 308.500)"><path d="M-4.500 0q4.500-4.400 9 0q-4.500 4.400-9 0z" fill="#d0d0d0"/><circle cx="0" cy="0" r="1.500" fill="#444"/></g>
<g transform="translate(787 329.500)"><path d="M-4.500 0q4.500-4.400 9 0q-4.500 4.400-9 0z" fill="#d0d0d0"/><circle cx="0" cy="0" r="1.500" fill="#444"/></g>
</svg>
<!-- thumbs -->
<div class="thumb" style="top:162px;border-color:#fff"><i></i><b></b></div>
<div class="thumb" style="top:220px"><i></i><b></b></div>
<div class="abs" style="left:801px;top:318px;width:22px;height:23px;background:#fff;border:1px solid #cfcfcf"></div>
<div class="t ln" style="left:830px;top:170px">圆角矩形 1 拷贝</div>
<div class="t ln" style="left:825px;top:191px">效果</div>
<div class="t ln" style="left:838px;top:205px">渐变叠加</div>
<div class="t ln" style="left:830px;top:227px">圆角矩形 1</div>
<div class="t ln" style="left:825px;top:248px">效果</div>
<div class="t ln" style="left:838px;top:262px">斜面和浮雕</div>
<div class="t ln" style="left:838px;top:276px">内阴影</div>
<div class="t ln" style="left:838px;top:289px">渐变叠加</div>
<div class="t ln" style="left:838px;top:303px">投影</div>
<div class="t ln" style="left:832px;top:324px;font-style:italic">背景</div>
<div class="fx" style="top:169px">fx</div>
<div class="fx" style="top:226px">fx</div>
<svg class="abs" style="left:967px;top:323px" width="10" height="12" viewBox="0 0 10 12" fill="none"><rect x="1" y="5.500" width="8" height="5.500" fill="#b8b8b8"/><path d="M2.800 5.500v-2a2.200 2.200 0 0 1 4.400 0v2" stroke="#b8b8b8" stroke-width="1.300"/><rect x="3.500" y="7.500" width="3" height="2" fill="#555"/></svg>
</div>
</body>
</html>
